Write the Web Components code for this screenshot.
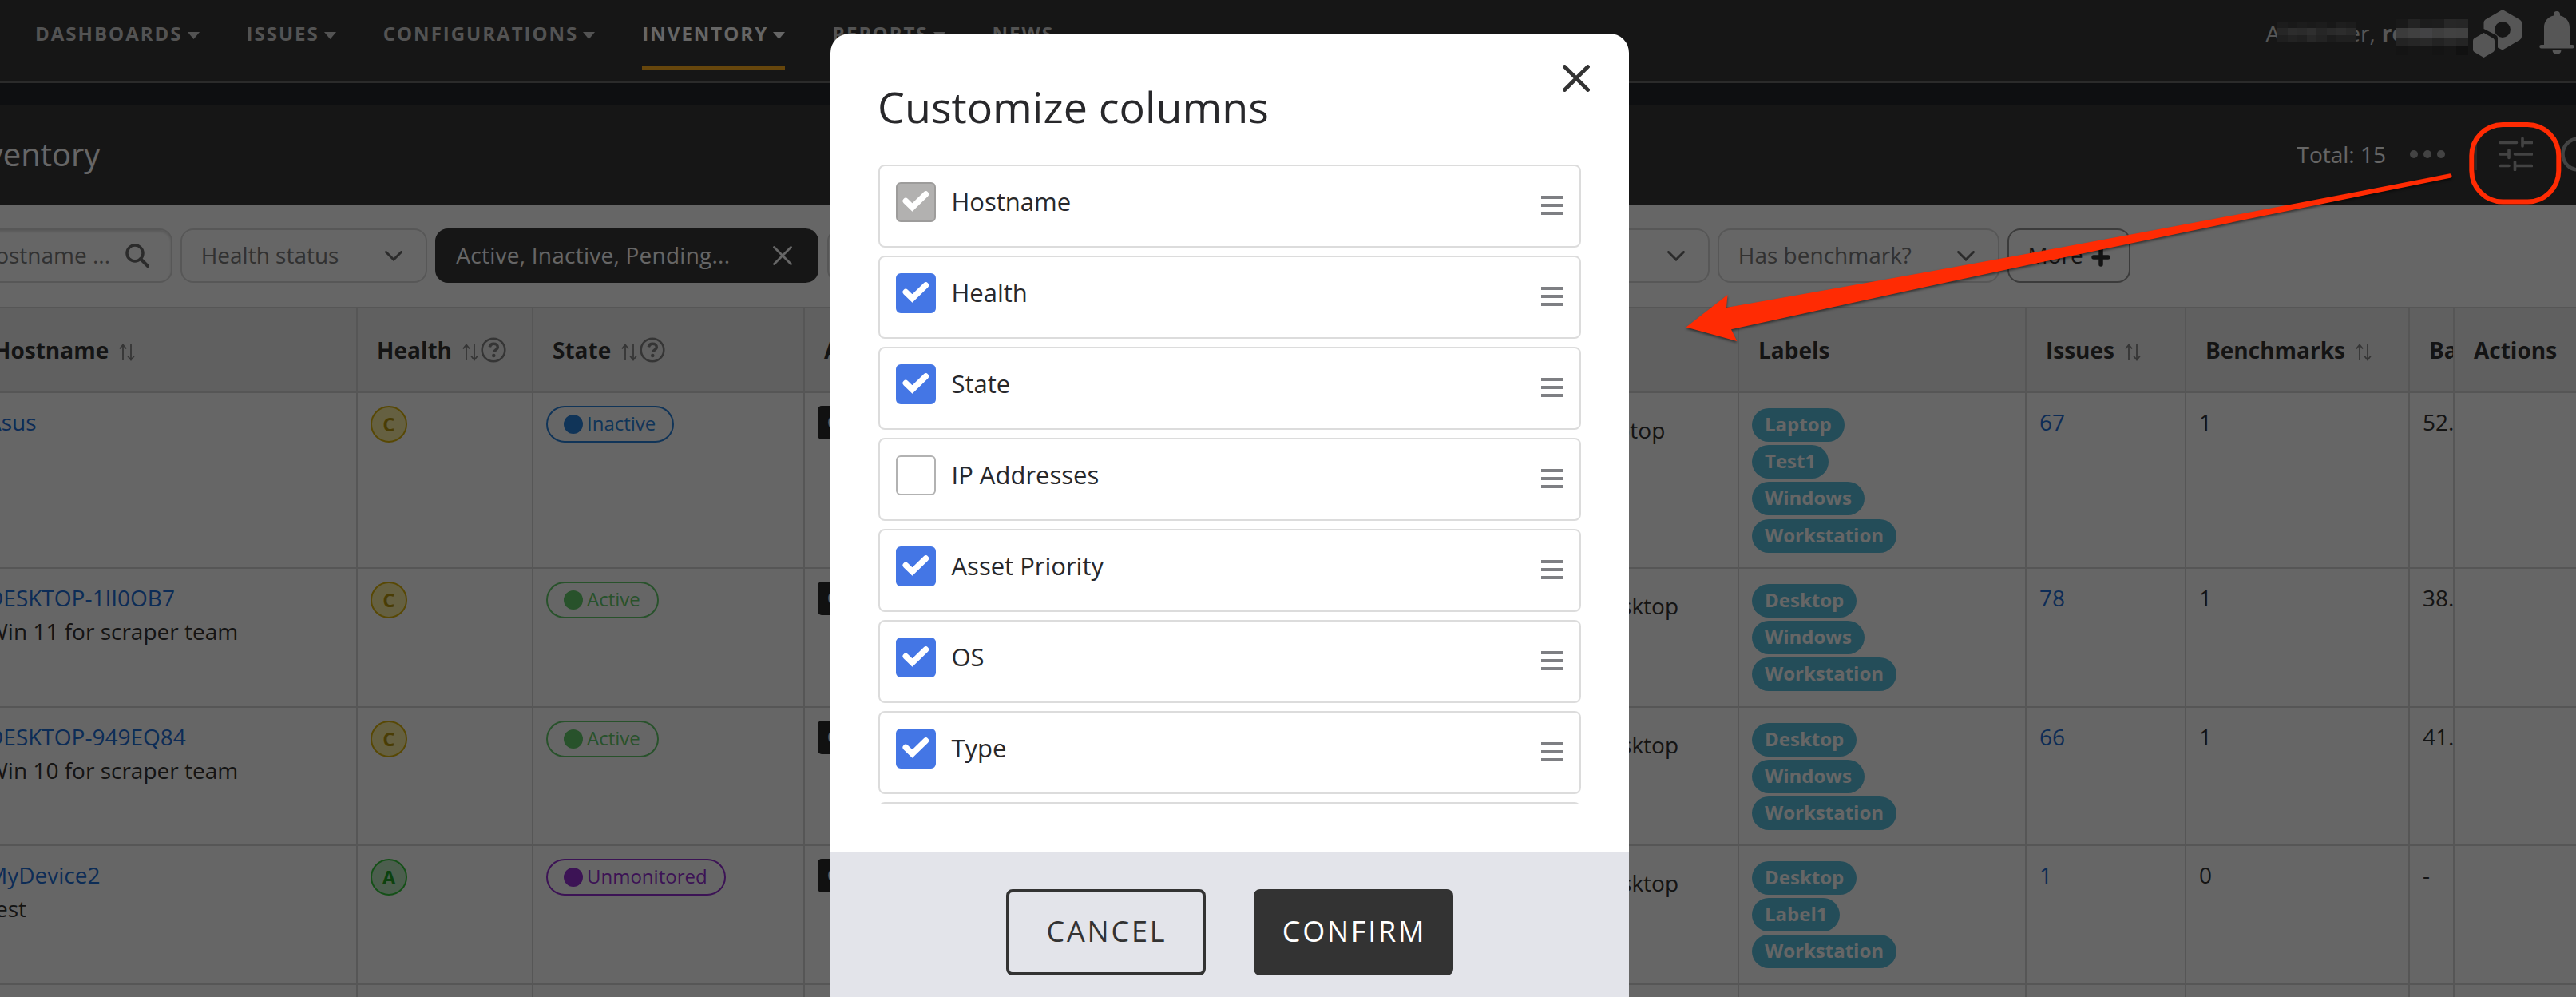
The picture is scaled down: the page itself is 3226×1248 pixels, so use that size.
<!DOCTYPE html>
<html lang="en">
<head>
<meta charset="utf-8">
<title>Inventory</title>
<style>
  body {
    margin: 0;
    width: 3226px;
    height: 1248px;
    position: relative;
    overflow: hidden;
    background: #fff;
    color: #333;
    font: 28px/42px "Open Sans", "Noto Sans", sans-serif;
  }
</style>
</head>
<body>
<inventory-page></inventory-page>
<modal-backdrop>
  <column-dialog heading="Customize columns">
    <column-option state="disabled">Hostname</column-option>
    <column-option state="on">Health</column-option>
    <column-option state="on">State</column-option>
    <column-option state="off">IP Addresses</column-option>
    <column-option state="on">Asset Priority</column-option>
    <column-option state="on">OS</column-option>
    <column-option state="on">Type</column-option>
    <column-option state="off"></column-option>
    <dialog-button slot="footer">CANCEL</dialog-button>
    <dialog-button slot="footer" primary>CONFIRM</dialog-button>
  </column-dialog>
</modal-backdrop>
<callout-marks></callout-marks>

<script>
const define = (name, html, setup) => {
  customElements.define(name, class extends HTMLElement {
    connectedCallback() {
      if (this.shadowRoot) return;
      this.attachShadow({ mode: 'open' });
      this.shadowRoot.innerHTML = typeof html === 'function' ? html(this) : html;
      if (setup) setup(this);
    }
  });
};

/* ---------- icons ---------- */

const ICONS = {
  caret: [15, 9, '<path d="M0 0h15L7.500 9z" fill="currentColor"/>'],
  chevron: [22, 13, '<path d="M1.5 1.5 11 11 20.500 1.5" fill="none" stroke="currentColor" stroke-width="3" stroke-linecap="round"/>'],
  clear: [24, 24, '<path d="M1.500 1.500 22.500 22.500M22.500 1.500 1.500 22.500" stroke="currentColor" stroke-width="2.800" stroke-linecap="round"/>'],
  search: [30, 30, '<circle cx="12" cy="12" r="10" fill="none" stroke="currentColor" stroke-width="3.500"/><path d="M19 19 28 28" stroke="currentColor" stroke-width="4" stroke-linecap="round"/>'],
  plus: [24, 24, '<path d="M12 3v18M3 12h18" stroke="currentColor" stroke-width="5.500" stroke-linecap="round"/>'],
  sort: [20, 22, '<path d="M5 21V1.500M1 6.500 5 1.500 9 6.500M15 1V20.500M11 15.500 15 20.500 19 15.500" fill="none" stroke="currentColor" stroke-width="1.800"/>'],
  help: [32, 32, '<circle cx="16" cy="16" r="14.300" fill="none" stroke="currentColor" stroke-width="2.600"/><path d="M11.300 12.300c.6-3 2.300-4 5-4 2.900 0 5 1.500 5 4.100 0 3.600-4.700 3.400-4.700 6.400" fill="none" stroke="currentColor" stroke-width="3.600"/><circle cx="16.300" cy="23" r="2.300" fill="currentColor"/>'],
  brand: [61, 60, '<path d="M37 0 58.500 12.500Q61 14 61 16.500V34Q61 36.500 58.500 38L37 50.500 31 47.500V35.500Q31 33 29 32L13.500 24V16.500Q13.500 14 15.500 12.500zM37 15a10 10 0 1 0 0 20 10 10 0 0 0 0-20z" fill="currentColor" fill-rule="evenodd"/><path d="M13.500 29 25.500 36Q27 37 27 39V50Q27 52 25.500 53L13.500 60 1.500 53Q0 52 0 50V39Q0 37 1.500 36z" fill="currentColor"/>'],
  bell: [44, 54, '<path d="M22 0a4 4 0 0 1 4 4v1.500C33.500 7 38 13 38 20v22h3.500a2.200 2.200 0 0 1 0 4.400h-39a2.200 2.200 0 0 1 0-4.400H6V20C6 13 10.500 7 18 5.500V4a4 4 0 0 1 4-4zM16.500 48.500h11a5.500 5.500 0 0 1-11 0z" fill="currentColor"/>'],
  dots: [44, 10, '<g fill="currentColor"><circle cx="5" cy="5" r="5"/><circle cx="22" cy="5" r="5"/><circle cx="39" cy="5" r="5"/></g>'],
  sliders: [42, 42, '<path d="M1.500 6.500H21.500M29 1.500V11M29 6.500H40.500M1.500 21H12M12 16V25.500M19.500 21H40.500M1.500 35.500H12M19.500 30.500V40.500M19.500 35.500H40.500" fill="none" stroke="currentColor" stroke-width="3.600" stroke-linecap="round"/>'],
  ring: [44, 44, '<circle cx="22" cy="22" r="19.500" fill="none" stroke="currentColor" stroke-width="4.500"/>'],
  close: [34, 34, '<path d="M2.500 2.500 31.500 31.500M31.500 2.500 2.500 31.500" stroke="currentColor" stroke-width="4.800" stroke-linecap="round"/>'],
  check: [34, 26, '<path d="M4.200 12.500 12.500 20.500 29.500 4" fill="none" stroke="currentColor" stroke-width="7.400" stroke-linecap="round" stroke-linejoin="miter"/>'],
  grip: [28, 24, '<path d="M0 2h28M0 12h28M0 22h28" stroke="currentColor" stroke-width="4"/>']
};

define('ui-icon', el => {
  const [w, h, shape] = ICONS[el.getAttribute('name')];
  return `
    <style>:host { display: block; flex: none; } svg { display: block; }</style>
    <svg width="${w}" height="${h}" viewBox="0 0 ${w} ${h}">${shape}</svg>`;
});

/* ---------- top navigation ---------- */

define('nav-item', el => `
  <style>
    :host {
      display: flex;
      align-items: center;
      gap: 6px;
      height: 64px;
      box-sizing: border-box;
      border-bottom: 6px solid transparent;
      color: #d0d0d0;
      font-size: 24px;
      font-weight: 700;
      letter-spacing: 2px;
    }
    :host([active]) { color: #fff; border-color: #ffae20; }
    span { height: 42px; line-height: 42px; margin-top: -23px; }
    ui-icon { margin-top: -18px; }
  </style>
  <span><slot></slot></span>
  ${el.hasAttribute('plain') ? '' : '<ui-icon name="caret"></ui-icon>'}`);

define('pixel-mask', el => {
  const rows = el.getAttribute('shades').split('|');
  return `
  <style>
    :host { display: grid; overflow: hidden; }
    div { display: flex; }
    i { flex: 1; }
  </style>
  ${rows.map(row => `<div>${row.split(' ').map(c => `<i style="background:#${c}"></i>`).join('')}</div>`).join('')}`;
});

define('app-nav', `
  <style>
    :host {
      display: flex;
      justify-content: space-between;
      box-sizing: border-box;
      height: 104px;
      padding: 24px 2px 0 44px;
      background: #393939;
      border-bottom: 2px solid #6c6c6c;
    }
    nav { display: flex; gap: 59px; }
    .user { display: flex; color: #d6d6d6; }
    .name { display: flex; height: 42px; line-height: 42px; margin-top: -4px; }
    b { margin-left: 8px; }
    pixel-mask { position: relative; }
    .first { width: 98px; height: 25px; margin: 7px -10px 0 -3px; }
    .org { width: 90px; height: 45px; margin: 4px 0 0 -11px; }
    .brand { margin: -12px 0 0 6px; }
    .bell { margin: -10px 0 0 22px; }
  </style>
  <nav>
    <nav-item>DASHBOARDS</nav-item>
    <nav-item>ISSUES</nav-item>
    <nav-item>CONFIGURATIONS</nav-item>
    <nav-item active>INVENTORY</nav-item>
    <nav-item>REPORTS</nav-item>
    <nav-item plain>NEWS</nav-item>
  </nav>
  <div class="user">
    <div class="name">
      A<pixel-mask class="first" shades="484848 404040 484848 424242 464646 3c3c3c 4c4c4c 484848|606060 727272 6c6c6c 767676 606060 6a6a6a 727272 686868|4e4e4e 585858 505050 646464 585858 484848 525252 525252"></pixel-mask>er,
      <b>re</b><pixel-mask class="org" shades="404040 585858 464646 4a4a4a 626262 606060|949494 a0a0a0 a8a8ac 9c9c9c a6a6a6 a2a2a2|585858 606060 666666 585858 646464 5a5a5a|343434 383838 383838 343434 383838 2c2c2c"></pixel-mask>
    </div>
    <ui-icon class="brand" name="brand"></ui-icon>
    <ui-icon class="bell" name="bell"></ui-icon>
  </div>`);

define('page-header', `
  <style>
    :host {
      display: flex;
      justify-content: space-between;
      align-items: center;
      box-sizing: border-box;
      height: 152px;
      padding-bottom: 2px;
      border-top: 28px solid #25272b;
      background: #393939;
      color: #fff;
    }
    h1 { margin: 0 0 0 -52px; font-size: 40px; font-weight: 400; }
    .tools { display: flex; align-items: center; margin-right: -25px; color: #a8a8a8; }
    .total { color: #fff; margin-right: 30px; }
    hr { width: 3px; height: 40px; margin: 0 28px 0 37px; border: 0; background: #646464; }
    ui-icon:last-child { margin-left: 35px; }
  </style>
  <h1>Inventory</h1>
  <div class="tools">
    <span class="total">Total: 15</span>
    <ui-icon name="dots"></ui-icon>
    <hr>
    <ui-icon name="sliders"></ui-icon>
    <ui-icon name="ring"></ui-icon>
  </div>`);

/* ---------- filters ---------- */

define('filter-box', el => `
  <style>
    :host {
      display: flex;
      align-items: center;
      justify-content: space-between;
      box-sizing: border-box;
      height: 68px;
      padding: 0 29px 0 23.500px;
      border: 2px solid #dadada;
      border-radius: 16px;
      color: #7c7c7c;
      white-space: nowrap;
    }
    span { margin-top: -2px; }
    ui-icon { color: #6c6c6c; }
    :host([kind="search"]) { padding-right: 27px; box-shadow: inset 0 2px 3px #ddd; }
    :host([kind="set"]) { background: #393939; border-color: #393939; color: #fff; padding: 0 31px 0 24px; letter-spacing: .25px; }
    :host([kind="set"]) ui-icon { color: #fff; }
    :host([kind="more"]) { border-color: #949494; color: #333; padding: 0 23px; }
    :host([kind="more"]) ui-icon { color: #333; margin-top: 4px; }
  </style>
  <span><slot></slot></span>
  <ui-icon name="${el.getAttribute('icon') || 'chevron'}"></ui-icon>`);

define('filter-bar', `
  <style>
    :host {
      display: flex;
      gap: 10.670px;
      align-items: center;
      box-sizing: border-box;
      height: 128px;
      margin-left: -52px;
    }
  </style>
  <filter-box kind="search" icon="search" style="width:267.500px">Hostname ...</filter-box>
  <filter-box style="width:308.500px">Health status</filter-box>
  <filter-box kind="set" icon="clear" style="width:480px">Active, Inactive, Pending...</filter-box>
  <filter-box style="width:547px"></filter-box>
  <filter-box style="width:547px"></filter-box>
  <filter-box style="width:352.500px">Has benchmark?</filter-box>
  <filter-box kind="more" icon="plus" style="width:153.500px">More</filter-box>`);

/* ---------- table ---------- */

define('health-grade', `
  <style>
    :host {
      display: block;
      box-sizing: border-box;
      width: 46px;
      height: 46px;
      border: 2px solid #dbb40c;
      border-radius: 50%;
      background: #fdf0a4;
      color: #b8990a;
      font-size: 24px;
      font-weight: 700;
      line-height: 41px;
      text-align: center;
    }
    :host([grade="A"]) { border-color: #35c93c; background: #bdecc2; color: #1ea526; }
  </style>
  <slot></slot>`);

define('state-pill', `
  <style>
    :host {
      display: inline-flex;
      align-items: center;
      gap: 5px;
      box-sizing: border-box;
      height: 46px;
      padding: 0 21px 0 20px;
      border: 2px solid;
      border-radius: 23px;
      color: #2a82dc;
      font-size: 24px;
      vertical-align: top;
    }
    :host([state="active"]) { color: #64cc6c; }
    :host([state="unmonitored"]) { color: #9630d4; }
    i { width: 24px; height: 24px; border-radius: 50%; background: currentColor; }
    span { margin-top: -2px; }
  </style>
  <i></i><span><slot></slot></span>`);

define('label-pill', `
  <style>
    :host {
      display: block;
      width: max-content;
      height: 42px;
      padding: 0 16px;
      border-radius: 21px;
      background: #5bc0de;
      color: #fff;
      font-size: 24px;
      font-weight: 700;
      line-height: 40px;
    }
  </style>
  <slot></slot>`);

const COLUMNS = [
  ['Hostname', 'sort'], ['Health', 'sort help'], ['State', 'sort help'], ['Asset Priority', ''],
  ['', ''], ['Labels', ''], ['Issues', 'sort'], ['Benchmarks', 'sort'], ['Ba', ''], ['Actions', '']
];

const ASSETS = [
  { host: 'Asus', note: '', grade: 'C', state: 'Inactive', type: 'Laptop', labels: ['Laptop', 'Test1', 'Windows', 'Workstation'], issues: 67, marks: 1, score: '52.' },
  { host: 'DESKTOP-1II0OB7', note: 'Win 11 for scraper team', grade: 'C', state: 'Active', type: 'Desktop', labels: ['Desktop', 'Windows', 'Workstation'], issues: 78, marks: 1, score: '38.' },
  { host: 'DESKTOP-949EQ84', note: 'Win 10 for scraper team', grade: 'C', state: 'Active', type: 'Desktop', labels: ['Desktop', 'Windows', 'Workstation'], issues: 66, marks: 1, score: '41.' },
  { host: 'MyDevice2', note: 'test', grade: 'A', state: 'Unmonitored', type: 'Desktop', labels: ['Desktop', 'Label1', 'Workstation'], issues: 1, marks: 0, score: '-' }
];

define('asset-table', `
  <style>
    :host {
      display: grid;
      grid-template-columns: 480px 220px 340px 954px 216px 360px 200px 280px 56px 152px;
      grid-template-rows: 106px 220px 174px 173px 174px 174px;
      margin-left: -32px;
      border-top: 2px solid #d8d8d8;
    }
    .th, .td {
      box-sizing: border-box;
      border-right: 2px solid #d8d8d8;
      border-bottom: 2px solid #d8d8d8;
      overflow: hidden;
      white-space: nowrap;
    }
    .th {
      display: flex;
      align-items: center;
      padding-left: 24px;
      background: #f1f1f1;
      font-weight: 700;
    }
    .th ui-icon { color: #868686; }
    .th ui-icon[name="sort"] { margin: 6px 3px 0 13px; }
    .td { padding: 15px 0 0 16px; }
    .bare { border-right: 0; }
    .td.badge { padding-top: 16px; }
    .td.type { padding: 25px 0 0 32px; }
    .td.labels { display: grid; align-content: start; gap: 4.400px; padding-top: 18.500px; }
    a { color: #1f6fd8; text-decoration: none; }
    .tag {
      display: block;
      width: 150px;
      height: 42px;
      padding-left: 12px;
      border-radius: 5px;
      background: #2c2c2c;
      color: #fff;
      font-size: 24px;
      font-weight: 700;
      line-height: 40px;
    }
  </style>`, el => {
  const last = COLUMNS.length - 1;
  const head = COLUMNS.map(([text, icons], i) =>
    `<div class="th ${i === last || i === 3 ? 'bare' : ''}">${text}${icons.split(' ').filter(Boolean).map(n => `<ui-icon name="${n}"></ui-icon>`).join('')}</div>`).join('');
  const rows = ASSETS.map(a => `
    <div class="td"><a>${a.host}</a><div>${a.note}</div></div>
    <div class="td badge"><health-grade grade="${a.grade}">${a.grade}</health-grade></div>
    <div class="td badge"><state-pill state="${a.state.toLowerCase()}">${a.state}</state-pill></div>
    <div class="td badge bare"><span class="tag">C</span></div>
    <div class="td type">${a.type}</div>
    <div class="td labels">${a.labels.map(l => `<label-pill>${l}</label-pill>`).join('')}</div>
    <div class="td"><a>${a.issues}</a></div>
    <div class="td">${a.marks}</div>
    <div class="td">${a.score}</div>
    <div class="td bare"></div>`).join('');
  const rest = COLUMNS.map((c, i) => `<div class="td ${i === last || i === 3 ? 'bare' : ''}"></div>`).join('');
  el.shadowRoot.innerHTML += head + rows + rest;
});

define('inventory-page', `
  <style>:host { display: block; height: 1248px; overflow: hidden; }</style>
  <app-nav></app-nav>
  <page-header></page-header>
  <filter-bar></filter-bar>
  <asset-table></asset-table>`);

/* ---------- dialog ---------- */

define('modal-backdrop', `
  <style>
    :host {
      position: absolute;
      inset: 0;
      display: flex;
      justify-content: center;
      align-items: flex-start;
      padding: 42px 146px 0 0;
      background: rgba(0, 0, 0, .6);
    }
  </style>
  <slot></slot>`);

define('column-dialog', el => `
  <style>
    :host {
      display: block;
      width: 1000px;
      height: 1226px;
      border-radius: 24px;
      overflow: hidden;
      background: #fff;
      color: #28282b;
    }
    header { display: flex; justify-content: space-between; height: 164px; padding: 0 49px 0 60px; }
    h2 { margin: 55px 0 0 -1px; font-size: 53.800px; line-height: 72px; font-weight: 400; }
    header ui-icon { margin-top: 39px; color: #333; }
    .list { display: grid; align-content: start; gap: 10px; height: 800px; margin: 0 60px 60px; overflow: hidden; }
    footer { display: flex; justify-content: center; gap: 60px; height: 202px; padding-top: 47px; box-sizing: border-box; background: #e3e4ea; }
  </style>
  <header><h2>${el.getAttribute('heading')}</h2><ui-icon name="close"></ui-icon></header>
  <div class="list"><slot></slot></div>
  <footer><slot name="footer"></slot></footer>`);

define('column-option', el => `
  <style>
    :host {
      display: flex;
      gap: 19.500px;
      box-sizing: border-box;
      height: 104px;
      padding: 20px;
      border: 2px solid #dcdcdc;
      border-radius: 8px;
      font-size: 31px;
      line-height: 48px;
    }
    .box {
      display: grid;
      place-items: center;
      box-sizing: border-box;
      width: 50px;
      height: 50px;
      border: 2px solid #b2b2b2;
      border-radius: 6px;
      color: #fff;
    }
    .box ui-icon { margin-top: -3px; }
    :host([state="on"]) .box { background: #4476e5; border-color: #4476e5; }
    :host([state="disabled"]) .box { background: #b2b1b0; border-color: #9d9c9b; }
    .grip { margin: 17px 0 0 auto; color: #7e7f83; }
  </style>
  <div class="box">${el.getAttribute('state') === 'off' ? '' : '<ui-icon name="check"></ui-icon>'}</div>
  <span><slot></slot></span>
  <ui-icon class="grip" name="grip"></ui-icon>`);

define('dialog-button', `
  <style>
    :host {
      box-sizing: border-box;
      display: block;
      width: 250px;
      height: 108px;
      padding-left: 2px;
      border: 4px solid #333;
      border-radius: 8px;
      color: #333;
      font-size: 36px;
      font-weight: 500;
      line-height: 98px;
      letter-spacing: 2.800px;
      text-align: center;
    }
    :host([primary]) { background: #333; color: #fff; }
  </style>
  <slot></slot>`);

/* ---------- callout over everything ---------- */

define('callout-marks', `
  <style>
    :host { position: absolute; inset: 0; pointer-events: none; }
    svg { display: block; }
    .arrow { filter: drop-shadow(0 2px 1.500px rgba(0, 0, 0, .5)); }
  </style>
  <svg width="3226" height="1248" viewBox="0 0 3226 1248">
    <path class="arrow" fill="#ff2b03" d="M2111.500 409.500 2163.500 369 2162 385Q2615 306 3067 217.500A2.700 2.700 0 0 1 3068.500 222.800Q2618 313 2168 412.300L2175.300 427z"/>
    <rect x="3095.300" y="156" width="109" height="96.500" rx="39" fill="none" stroke="#ff2b03" stroke-width="6"/>
  </svg>`);
</script>
</body>
</html>
